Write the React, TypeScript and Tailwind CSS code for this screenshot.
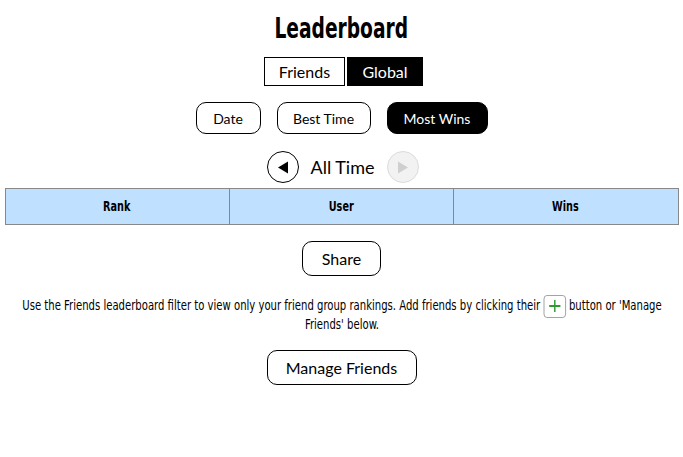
import React from "react";

const cond = { fontFamily: '"DejaVu Sans Condensed", "Liberation Sans", sans-serif' };
const geo = { fontFamily: 'Lato, "Noto Sans", sans-serif' };

export default function App() {
  return (
    <div className="w-[683px] h-[457px] overflow-hidden bg-white flex flex-col items-center text-black">
      <h1 className="mt-[12px] h-[34px] text-[28px] font-bold leading-[34px] inline-block scale-x-[0.74]" style={cond}>
        Leaderboard
      </h1>
      <div className="mt-[11px] ml-[4px] flex gap-[2px]" style={geo}>
        <button className="w-[81px] h-[29px] border border-black bg-white text-[16px]">Friends</button>
        <button className="w-[76px] h-[29px] border border-black bg-black text-white text-[16px]">Global</button>
      </div>
      <div className="mt-[16px] flex gap-[16px]" style={geo}>
        <button className="w-[65px] h-[32px] rounded-[10px] border border-black text-[14px]">Date</button>
        <button className="w-[94px] h-[32px] rounded-[10px] border border-black text-[14px]">Best Time</button>
        <button className="w-[101px] h-[32px] rounded-[10px] border border-black bg-black text-white text-[14px]">Most Wins</button>
      </div>
      <div className="mt-[17px] ml-[2px] flex items-center gap-[12px]" style={geo}>
        <button className="w-[32px] h-[32px] rounded-full border border-black flex items-center justify-center">
          <svg width="12" height="13" viewBox="0 0 12 13"><path d="M1 6.5 L11 0.5 L11 12.5 Z" fill="#000" /></svg>
        </button>
        <span className="text-[18px] w-[64px] text-center">All Time</span>
        <button className="w-[32px] h-[32px] rounded-full border border-[#dcdcdc] bg-[#f2f2f2] flex items-center justify-center">
          <svg width="12" height="13" viewBox="0 0 12 13"><path d="M11 6.5 L1 0.5 L1 12.5 Z" fill="#cfcfcf" /></svg>
        </button>
      </div>
      <div className="mt-[5px] w-[674px] grid grid-cols-3 border border-[#888] bg-[#c0e0ff] h-[37px] text-[14px] font-bold">
        <div className="flex items-center justify-center border-r border-[#888]">
          <span className="inline-block scale-x-[0.77]" style={cond}>Rank</span>
        </div>
        <div className="flex items-center justify-center border-r border-[#888]">
          <span className="inline-block scale-x-[0.77]" style={cond}>User</span>
        </div>
        <div className="flex items-center justify-center">
          <span className="inline-block scale-x-[0.77]" style={cond}>Wins</span>
        </div>
      </div>
      <button className="mt-[16px] w-[79px] h-[35px] rounded-[10px] border border-black text-[16px]" style={geo}>Share</button>
      <p className="mt-[20px] w-[810px] shrink-0 text-center text-[14px] leading-[19px] scale-x-[0.8]" style={cond}>
        Use the Friends leaderboard filter to view only your friend group rankings. Add friends by clicking their{" "}
        <span className="inline-flex items-center justify-center w-[28px] h-[23px] my-[-3px] border border-[#999] rounded-[4px] align-middle">
          <svg width="18" height="14" viewBox="0 0 18 14">
            <path d="M9 1 V13 M2 7 H16" stroke="#2e9a2e" strokeWidth="1.8" fill="none" />
          </svg>
        </span>{" "}
        <span>button or 'Manage</span>
        <br />
        <span>Friends' below.</span>
      </p>
      <button className="mt-[16px] w-[150px] h-[35px] rounded-[10px] border border-black text-[16px]" style={geo}>Manage Friends</button>
    </div>
  );
}
